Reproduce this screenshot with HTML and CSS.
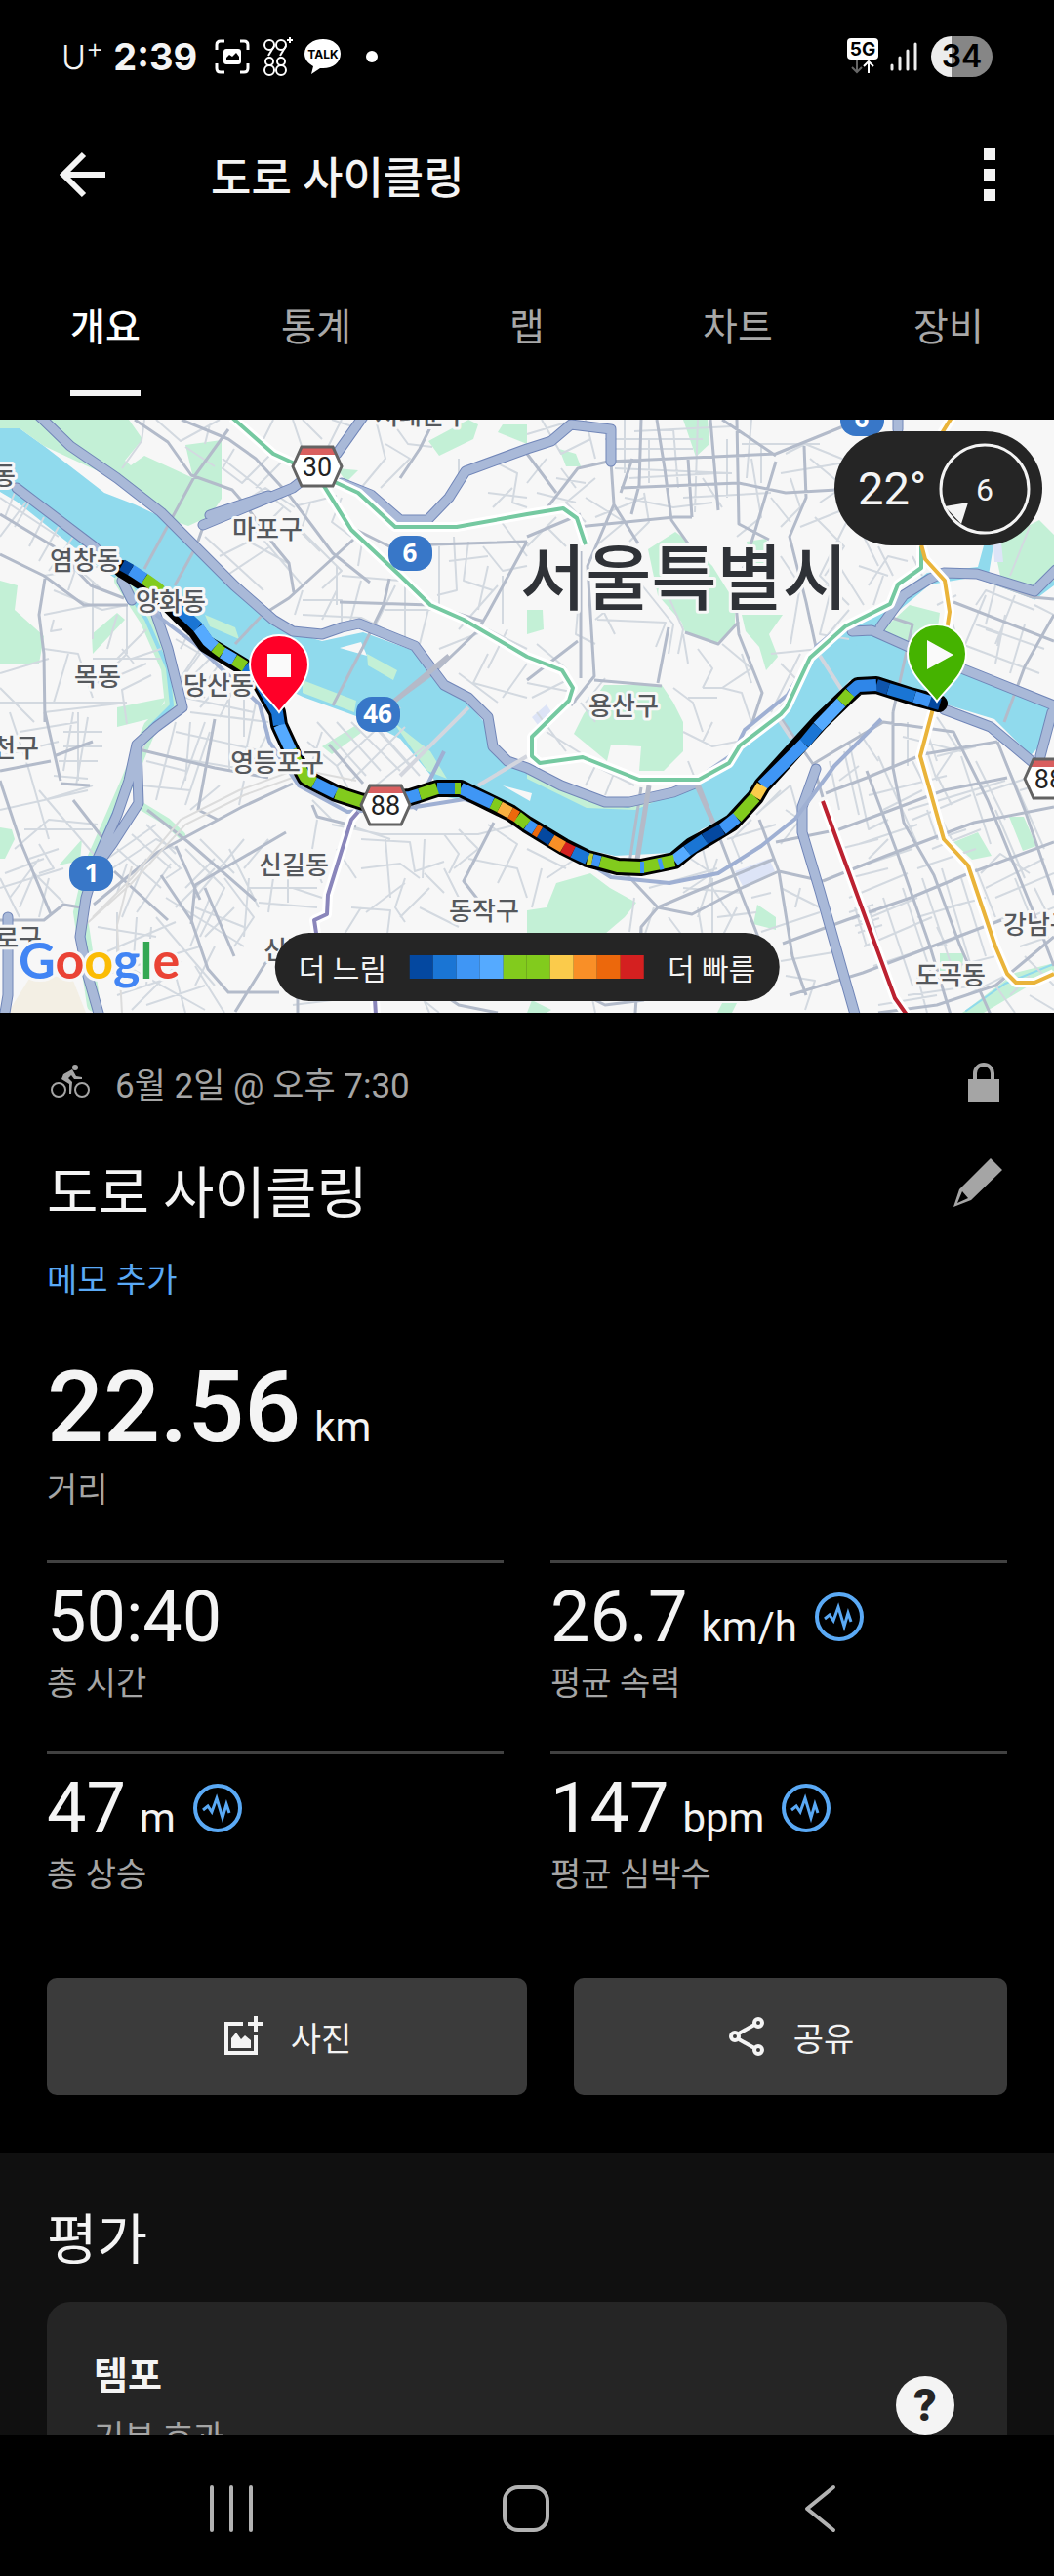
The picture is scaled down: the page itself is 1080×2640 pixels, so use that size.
FILE: index.html
```html
<!DOCTYPE html>
<html lang="ko">
<head>
    <meta charset="UTF-8">
    <meta name="viewport" content="width=device-width, initial-scale=1.0">
    <title>도로 사이클링</title>
    <link rel="stylesheet" href="styles.css">
</head>
<body>
<div class="screen">
    <div class="status-bar">
        <div class="status-left">
            <span class="carrier">U<sup>+</sup></span>
            <span class="clock">2:39</span>
            <svg class="icon-capture" width="36" height="36" viewBox="0 0 36 36" fill="none" stroke="#fff" stroke-width="3">
                <path d="M2 11V6q0-4 4-4h4M26 2h4q4 0 4 4v5M34 25v5q0 4-4 4h-4M10 34H6q-4 0-4-4v-5"/>
                <rect x="9" y="10" width="18" height="16" rx="3" fill="#fff" stroke="none"/>
                <path d="M12 22v-3l3-3 3 2 4-4 3 4v4z" fill="#000" stroke="none"/>
            </svg>
            <svg class="icon-count" width="30" height="40" viewBox="0 0 30 40" fill="none" stroke="#fff" stroke-width="2">
                <circle cx="6" cy="8" r="5"/><path d="M11 9 5 19"/>
                <circle cx="18" cy="8" r="5"/><path d="M23 9l-6 10"/>
                <circle cx="6" cy="25" r="4"/><circle cx="6" cy="34" r="5"/>
                <circle cx="18" cy="25" r="4"/><circle cx="18" cy="34" r="5"/>
                <path d="M27 0v6M24 3h6"/>
            </svg>
            <svg class="icon-talk" width="38" height="36" viewBox="0 0 38 36">
                <path d="M19 0C9 0 0 6 0 15c0 6 4 10 9 13L7 36l9-6h3c10 0 18-6 18-15S29 0 19 0z" fill="#fff"/>
                <text x="19" y="20" text-anchor="middle" class="talk-text">TALK</text>
            </svg>
            <span class="dot"></span>
        </div>
        <div class="status-right">
            <svg width="34" height="40" viewBox="0 0 34 40" fill="none">
                <rect x="1" y="1" width="32" height="22" rx="4" fill="#fff"/>
                <text x="17" y="19" text-anchor="middle" class="net-text">5G</text>
                <path d="M11 24v12M6 31l5 5 5-5" stroke="#666" stroke-width="2"/>
                <path d="M23 37V25M18 30l5-5 5 5" stroke="#fff" stroke-width="2"/>
            </svg>
            <svg class="icon-signal" width="28" height="32" viewBox="0 0 28 32" stroke="#eee" stroke-width="3" stroke-linecap="round">
                <path d="M2 25v4M10 17v12M18 10v19M26 3v26"/>
            </svg>
            <span class="battery">34</span>
        </div>
    </div>

    <header class="app-bar">
        <button class="icon-button" type="button" aria-label="뒤로">
            <svg width="48" height="48" viewBox="0 0 48 48" fill="none" stroke="#f4f4f4" stroke-width="6"><path d="M48 24H5M26 3 5 24l21 21"/></svg>
        </button>
        <h1>도로 사이클링</h1>
        <button class="icon-button" type="button" aria-label="더보기">
            <svg width="12" height="54" viewBox="0 0 12 54" fill="#f4f4f4"><path d="M0 0h12v12H0zM0 21h12v12H0zM0 42h12v12H0z"/></svg>
        </button>
    </header>

    <nav class="tabs">
        <a class="active" href="#overview"><span>개요</span></a>
        <a href="#stats"><span>통계</span></a>
        <a href="#laps"><span>랩</span></a>
        <a href="#charts"><span>차트</span></a>
        <a href="#gear"><span>장비</span></a>
    </nav>

    <main>
        <section class="map" id="overview">
            <svg class="map-canvas" viewBox="0 0 1080 608">
                <rect width="1080" height="608" fill="#f7f7f7"/>

                <!-- river -->
                <g fill="#90daed">
                    <path d="M0 9H20L45 27l62 48 31 12 34 16 31 30 48 47 31 33 48 14 42-9 55 20 27 39 25 13 17 20 10 30 34 17 62 27 41 8 48-15 28-12 31-21 10-17 35-26 17-14 28-53 30-23 52 20 76 26 82 34v3l-10 36-14 14-27-27-10-10-66-20-55-23-27 3-35 40-58 67-25 30-34 16-31 24-58 3-45-10-45-33-48-10-34-7-17-23-31-37-45-23-55-20-55-27-48-37-45-30-42-26-24-17-34-27-45-36-17-10z"/>
                    <path d="M868 216l44-30 38-29 52-6 6-22h10l-5 30-60 10-30 25-45 38z"/>
                </g>
                <path d="M1000 158l60 22 20-15" fill="none" stroke="#90daed" stroke-width="8"/>

                <!-- parks -->
                <g fill="#c3f0d6">
                    <path d="M0 0h132l14 20-18 22 6 5 14-10 50 23-8-34 37-5v60l-12 18-22 10-15-5-73-49-60-28L20 9H0z"/>
                    <path d="M0 165l18 5-3 25 30 27-5 28H0zM94 220l26-22 8 7-33 35zM439 22l41-22 10 5-5 15-35 17zM515 5h25v20l-30-12zM700 0h25l2 25-14 13zM573 30l17 5 5 13h-15z"/>
                    <path d="M664 133l28-18 11 8 27 27 23 37v26l-20 17-31-12-4-11-24-27zM760 200h42l-14 20 9 23-12 14-7-24-14-16zM765 125l20-3 10 38-25-10zM540 195h16l1 20-17 5z"/>
                    <path d="M619 272h59l12 18 10 20v30l-20 20h-25l2-25-31-2-4 17-34-28 10-20z"/>
                    <path d="M1018 127l47-24 15 15v47l-20 7-35-12zM932 190l31 8-3 22-35 10-20-15z"/>
                    <path d="M540 503l20-3 10-25 35-10 20 15 27 15-12 15-20 17h-80zM776 497l19 13v13l-23-6zM977 433l25-10 14 24-20 4zM1034 407h15l13 30-14 5zM963 547h25l-5 30h-20zM1040 567l40-10v8l-72 43h-22z"/>
                    <path d="M0 418l12 2 3 10-10 20H0zM60 457l24-27-2 22zM345 50l22 2-12 12zM545 595l20 10-5 3h-20zM740 598l15 0-5 10h-15z"/>
                    <path d="M310 267l55 21-2 12-53-20zM330 335l35-22 5 8-30 22zM403 310l38 30 17 28-20-8zM376 240l31 17-4 10-26-15zM210 200l31 13 4 12-30-13zM120 295l50-10-10 20-40 10z"/>
                    <path d="M540 363l62 27 41 8 48-15-40 17-50-2-61-30z"/>
                </g>
                <path d="M348 234l22-6 6 14z" fill="#f7f7f7"/>
                <path d="M515 375l30 8-2 8z" fill="#f7f7f7"/>
                <path d="M8 608l27-43 40 10 13 33z" fill="#f3efe4"/>
                <path d="M753 463l35-13 6 13-32 17zM545 305l15-13 5 8-14 13zM1018 128l8-2 2 20-9 0z" fill="#dde4f7"/>
                <g fill="none" stroke-linecap="round">
                    <path d="M124 165l26 40 22 50 4 38-22 22-25 60-35 80-12 50 6 40 8 55" stroke="#c3f0d6" stroke-width="14"/>
                    <path d="M124 165l26 40 22 50 4 38-22 22-25 60-35 80-12 50 6 40 8 55" stroke="#90daed" stroke-width="4"/>
                    <path d="M143 395l28 17 15 14" stroke="#c3f0d6" stroke-width="8"/>
                    <path d="M990 606l40-28 50-20" stroke="#90daed" stroke-width="2"/>
                </g>

                <!-- side streets -->
                <g class="streets-minor">
                    <path d="M148 0l-3 22-20 28M160 0l25 22 40-22M190 28l30 20M215 5l-5 20M240 30l-12 20 20 15 30-30M228 40l70 55M250 10l45 35M262 70l30-30M232 95l40-25 30 20M225 140l30-15 40 22M210 120l60 55M232 160l45-30M250 100l60 70M290 90l-25 25M305 88l40-10M300 105l50 50-20 18M318 85l-10 30 20 20M345 150v40M350 80l-10 25 20 15M310 175l-8 25M350 160l60 5M380 90l20 20M372 120l-5 30"/>
                    <path d="M310 200l60 3 20 10M310 185h40v30M370 165l-12 45M405 170l-20 40M330 205l15-30M395 195h60M415 170v60M440 190l-10 40M450 130v60M465 120l3 55-20 5M480 125l-5 40 30 10M495 130l20 25 25-5M500 150l-10 45M515 160v50M460 145l40-5M470 215l40-45M450 235l50-20 40 20M500 240l-15 30 55 15M520 215l-20 40M540 250l-25 35M470 260l40 30"/>
                    <path d="M385 0l10 40-25 30M395 25l25 15-30 30M400 0l18 25 25 3M350 0l-20 40M370 10l-30-10M300 0l10 30 25 5M280 0l-10 20M310 0l20 20M500 40l30 15-5 30 15 5M500 75l40 5M505 90l20-20M470 40v25M510 100l30 40"/>
                    <path d="M0 80l60 40M15 75l-10 25M30 85l-15 25M45 100L30 130M60 110l-20 35M75 120l-25 35M0 120l30-40M45 160l60-10M60 135l45 40M80 145l-10 30M55 175l50 20 25-5M45 200l50-10M55 205l-3 12 12-2M130 190v50M95 165v60M120 200l-10 35"/>
                    <path d="M45 235l35 5 15 45M0 260l50-15M70 240l-15 50M0 290h130M0 275l35 35M45 300l85-10M130 240l-30 30M150 215l-30 30M125 235l12 15M165 235l-30 10M95 245l70 0M115 265l35-15M155 262l-30 15 5 35"/>
                    <path d="M180 225l25 15-18 25M195 215l-10 20M205 235l-20 30 25 20M215 245l-30 30M225 250l-25 35M235 260l-30 35M245 265l-20 40M190 285l70 15M195 300l80 10M250 285v40M235 280v80M195 310l-5 60M180 320l90 20M170 345l90 15M180 310l-20 80M210 310l-25 70M215 320l-25 75M262 290l-15 75M275 320l-20 40M150 350l40 10M145 375l50 5M155 320l-10 20M225 375l-30 25M250 370l-5 25"/>
                    <path d="M10 300l20 60M20 320l60-10M75 300l-10 60M80 300v70M90 305l-12 70M65 320h40M65 335h40M60 350h40M55 365l35 3M45 390l50-15M0 345l60-15M30 360l20 70M40 380l60 70M0 400l90-20M25 420l70 0M15 440l35-30 50 5M5 465l40-15M40 435l15 25-15 5M0 480l65-20M10 490l30-40M20 500l15-35 30 30M0 470l20 40M50 470l-10 40M60 440l-30 10"/>
                    <path d="M110 450l50-35M100 470l60-40 20 10M120 440l45 40M135 425l40 35M150 415l30 30M130 455l-10 30M150 450l-25 60M175 455l-35 50M165 440l20 20-15 10M190 440l40 40-25 50M205 430l35 35M220 450l-30 30M235 440l30 60M250 430l-50 60M180 500l40-40M170 490l80 50M160 510l60 70M200 500l50 20M215 490l-20 50M240 500l-30 30M230 470l30 40-20 30M255 470l-5 60M140 510l-5 70M155 520l-5 60M120 505v70M100 520l60 10M110 545l70-30M105 570l100-30M120 590l60-20M135 605l50-50M180 570l10 38M200 560l30 48M130 560l80 45M150 600l60-20M220 540l-20 40"/>
                    <path d="M325 310l50 55M345 310l45 50M360 310l50 50M375 305l45 50M390 320l40 45M345 355l65-60M360 370l55-55M385 375l50-40M315 330l30 25 20 40M330 320l-10 30M320 390l20 20 60 20M340 415l50 10h100l40-10M325 410l-5 30M370 430l50 3 5 30 30-10M395 430l5 60M435 430l-2 40M455 425l15 20-10 20M470 420l20 20-25 20M500 415l30 20-20 40M345 440l20 30M370 460l40-5 20 15M415 470l-10 30 10 15M435 465l20 20M455 460l25 50M480 450l50 10 10 30M360 500l40 3-5 40M345 540l25-40M375 505l40-30M430 500l40 20M440 480l-30 30M275 430l-25 30M255 480h70M265 495l60 5M280 470l-5 35M295 445v50M320 450l10 25M300 480l30 10M390 560l60 48M300 600l80-10M410 540l30 68"/>
                    <path d="M540 15l50-15M555 0l20 35 30-15M600 0l10 40M640 0v55M620 20h100M650 12l100-5M630 30l80 0M645 60l90-5M630 50l120 5M665 20v45M690 10l5 60M715 0l-3 95M745 20v60M770 0l-5 60M780 25v40M760 25l80 0M700 80l90-5M640 80l50 10 40-5M720 60l20 30M660 75l5 30-20 20M610 60l-30 25 20 20M590 70l-15-20M560 40l-20 25M600 80l40 25-30 25M580 90l20 30M610 100l50-20M540 130l30-30M560 110l20 20M550 75l40 10M570 60l30 5"/>
                    <path d="M805 35l20-10 50 20M800 55l60-10 20 20M810 60l10 30-20 20M830 40l30 25M840 85l30-20M835 100l30 30-20 30M820 110l50-20M790 80l20 25M870 100l-30 60 30 30M880 110l20 40M850 180l-10 40 30 5M880 150l30 10M890 170l20-30 20 5M905 160l-10 30M830 165l30 10M800 140l20 30-10 60M870 195l-30 35M860 150l25 40M770 40l10 60-25 20M900 130l15 30M935 140l10 20"/>
                    <path d="M595 160l-5 60 20 10M612 205l70 3-10 25M640 180l-30 25M620 170l30-10 40 50-5 30M680 170l20 45-5 25M700 220l5 30M610 180l20 40M715 235l15 20-10 20M740 230l30 25-30 20-20 0M760 240l10 30M790 240l50-5M800 250l20 20-20 25M820 240l-30 60M740 275l20 5 10 30M690 275l20 15 10 30M705 285l30 0M540 270l50 10M545 285l40-20M550 230l30 25M570 250l20 40M620 265l-20 25M595 290l15 20M550 300l30 40M560 320l40 25M590 345l60 30M610 355l-10 20M630 360l-10 25"/>
                    <path d="M700 320l30 15 25-5M705 350l10 25M720 330l10-20M600 560l10 48M700 445l30 20-30 20M720 440l10 40 20 30M735 450l-20 60M770 410l-20 20 10 25M780 400l30-25 10 35-20 25M800 380l-25 25M805 400l15 10M745 430l50-15M700 480l60 5M770 490l20-5M735 510l40-5M755 500l-15 30M715 500l5 30M730 470v60M670 500l-10 30M650 490l-5 35M685 510l15 20M555 460l-10 40M540 440l40 20M590 450l-30 20M665 480l70-20M780 525l60-20M800 480l40 20M820 480l-5 20M800 555l60-10M805 570l30 5-10 30"/>
                    <path d="M850 350l10 50M865 340l15 65M870 330l20 90 20-10M880 320l20 30M900 345l40 90M860 370l20-15M930 310v45M950 320l10 30M925 325l60 15M960 305l20 30-20 30 15 30M935 350l40 80M960 345l40-10M985 345l30 90M890 385l80-20M930 400l100-30M905 400l40-20M1000 350l30 60M1030 350l40 90M1045 380l35-10M1000 385l60-20M935 410l60-25M910 430l-20 20M880 435l60-20M950 400l10 30 30-10M860 440l40-10M875 460l60-20M955 440l50-20M1020 400l30 70"/>
                    <path d="M870 470l40-10M870 490l60-25M880 515l60-25M885 540l70-30M895 560l60-20M890 500l20 70M905 490l30 90M925 480l30 90M945 470l30 90M965 460l30 100M985 470l25 80M1000 460l20 50M940 460l60-20M940 510l50-15M960 540l70-30M970 500l40-10M1010 480l60-30M1020 490l60-25M1005 465l20-20 30 20M1040 470l20 50M1060 480l20 40M1030 520l50-20M1045 540l30-10M1050 550l30 30M1035 590l20-20M1055 590l25 15M980 560l40-10M990 590l40-20M930 590l70-10M900 600l60-10M940 570l10 38M1020 580l20 28M960 520l10 20M950 340l10 30"/>
                    <path d="M870 505l25-8M873 512l25-8M876 519l25-8M879 526l25-8M876 500l12 40M884 497l12 40M1000 190l10-15 50 20M1020 170l-10 40M1040 180l-20 50M1000 210l70 25M985 230l80 30M975 205l10 35M960 190l20-10M1030 200l-10 50M1050 210l-15 50M1060 190l20 10M1010 215l15 5-3 12M1010 180l-25 60M1055 110l-20 50M1035 60l20-10"/>
                </g>
                <!-- main streets -->
                <g class="streets-main">
                    <path d="M138 0l34 23 24 34 42 15 13 15 31 43 14 17 5 30M234 10l-34 47-52 96M208 110l-7 20-22 40M0 97l55 33 38 40 34 13M0 138l45 22 41 30h45M46 163l-6 37 5 40 1 70M186 0l48 20 28 20 34 37 45 60 38 30M365 113l34 17 45-2 96-3M362 123l-66 60-27 17-28 30M540 125l-41 75-10 17-45 43-41 30M348 187l93 3 55 17M399 163l-6 27-21 43-31 60M445 0l-15 30-20 30"/>
                    <path d="M540 35l30 40M561 90l31-40 31-7 172-8 69-28M636 70l121-5 48 10 52-3M626 43l3 44-27 63 7 113-24 30M657 0l-2 67-8 30M673 0l8 50 7 53 17 24M705 40l4 60M728 0l8 93M755 0l2 107 31 16M795 43l-21 70-21 67 4 40 24 60-10 30M824 27l2 53-17 40 17 67 10 46M740 0l55 37M592 110l99-10h18M540 120l55-23M540 267l52-40M609 267l69 6M685 213l-11 57M702 218l34 12 21-23M595 135v130M977 187l103 40M998 160l60 22 22 2M1080 200l-30 53-21 57M905 200l30 10-20 90M629 87l25 40M648 40l-12 35"/>
                    <path d="M798 303l35 50 10 34M833 353l72-43 72 10 35 70 45 110 23 60M915 300v57l11 56 31 54 27 73 31 70M888 360l31 83 34 97 21 70M846 383l42-16 58-24 76-13M795 433l65-13 107-40 65-13M843 473l65-26 90-34 82-16M802 537l65-24 66-23 55-23 92-34M809 590l75-23 97-37 45-17M778 410l20 53 14 87 14 40M716 373l27 70 17 44 18 46M657 377l-14 90 31 33 35 7 51-27 38-17 45 10M1022 330l28 70 30 87M657 520l-6 88M643 467l-20-5M674 500l35-15 85-35M657 540v-20l17-20"/>
                    <path d="M0 360l52-10M0 370l21 63 31 74M46 300l16 70M0 513h45l20-16 18 3M96 497l66-54 86-46 52-24M117 463l55 50M151 400l42 33 69 60M165 467l31 46 17 50 21 24h52M293 423l-93 54-4 40M138 337l82 20 55 10M220 307l-17 93 20 10M506 413l-31 60 21 27M337 333l35 40M241 607l31-50 40-20M210 480l30 70M180 437l25 55M75 390l35 45M62 373l30 2M55 345l40-15M305 590l0 18M410 560l60 40 40 8M320 395l5 12 40 10M600 590l20 10 40-5M900 608l60-8 60-20 60-50"/>
                </g>
                <!-- railways -->
                <g fill="none" stroke="#dcdcdc" stroke-width="2">
                    <path d="M95 510l40-40 50-60 60-30 60-22 60 12M85 520l50-45 55-60 60-30 55-20M125 608l-5-90 15-60"/>
                </g>

                <!-- expressways -->
                <g class="expressway-edge">
                    <path id="e1" d="M40-4l32 31 48 33 45 35 35 35 40 40 40 35 20 12 30 3 20-7 18-4 57 23 30 40 25 13 20 20 5 30 15 15 20 7 35 18 45 17h25l45-10 22-9"/>
                    <path id="e2" d="M17 70l79 60 26 25M125 165l10 20M160 200l12 35 15 60-27 20-20 18-8 37-12 35-20 45-12 40-6 40 8 40 12 42M140 335l2 58-27 42-11 15"/>
                    <path id="e3" d="M208 108l92-38 45-35 27-38M215 98l60-20M350 65l30 12 30 26h28l22-23 17-27 63-23 25-8 20-17 41 5v33"/>
                    <path id="e4" d="M902 213l24-33 27-17 14-6 34 1 59 18 22-22M873 217l20-1 47 21 140 56M967 297l48 18 50 42 20 20M836 358l-14 39v26l18 60 37 130M1078 300l-12 45M920 0v10M8 510v80l-4 24"/>
                </g>
                <g class="expressway">
                    <use href="#e1"/><use href="#e2"/><use href="#e3"/><use href="#e4"/>
                </g>
                <g class="expressway-thin">
                    <path d="M160 200l40 30 66 62 10 38 30 45 50 27 70-5 50-8 50 16 40 26 60 38 60 6 50-10 44-28 35-28 40-54 48-48M716 367l35-24 12-25 44-36 30-50 25-20M455 340l-30 60"/>
                </g>
                <g fill="none" stroke="#b5bac8" stroke-width="5">
                    <path d="M400 292l60-50M665 375l-12 76M714 375l20 45"/>
                </g>
                <g fill="none" stroke="#d3d6de" stroke-width="4">
                    <path d="M840 242l27 42M480 295l-70 70M795 303l16 24M540 345l-50 30"/>
                </g>

                <!-- subway lines -->
                <g class="subway-case">
                    <path id="s2" d="M238-2l42 37 50 23 37 17 38 35h63l72-13 37-6 14 10 9 27M330 65l30 48 50 47 31 30 34 15 65 38 36 14 11 18-4 13-38 37v20l8 7 44-6 58 23h61l31-17 11-18 42-32 6-7 24-51 36-32 46-23 8-20 24-17v-22"/>
                    <path id="s3" d="M975-2l-10 16M944 128l4 15 20 22 5 32-2 13-16 90-12 45 24 85 25 27 28 83 12 28 9 9h19l20-9"/>
                    <path id="s4" d="M843 391l74 202 12 17"/>
                    <path id="s5" d="M367 402l-7 8-24 77-1 20-13 6 3 20 3 10M384 594l1 16"/>
                </g>
                <g class="subway">
                    <use href="#s2" stroke="#75c9a1"/>
                    <use href="#s3" stroke="#eab43a"/>
                    <use href="#s4" stroke="#bc2231"/>
                    <use href="#s5" stroke="#8a86bb"/>
                </g>

                <!-- ride track, coloured by speed -->
                <path class="track-edge" d="M962 291l-30-8-34-11-19 1-15 14-24 23-59 65-7 12-24 26-28 17-13 7-18 15-34 7-24-1-31-8-24-12-38-23-17-12-51-25h-24l-28 9-48 5-28-9-31-16-13-24-14-30-2-13-20-35-15-12-38-23-10-14-17-16-24-24-14-10-21-13"/>
                <g class="track">
                    <path stroke="#0448a0" d="M963 292l-10-3"/>
                    <path stroke="#3f96f5" d="M953 289l-16-5"/>
                    <path stroke="#1a75d4" d="M937 284l-27-8"/>
                    <path stroke="#0f55ac" d="M910 276l-12-4"/>
                    <path stroke="#2f86e8" d="M898 272l-19 1-8 7"/>
                    <path stroke="#82cb1d" d="M871 280l-9 10"/>
                    <path stroke="#55aaff" d="M862 290l-24 25"/>
                    <path stroke="#1a75d4" d="M838 315l-14 17"/>
                    <path stroke="#3f96f5" d="M824 332l-43 43"/>
                    <path stroke="#fbcb4b" d="M781 375l-7 12"/>
                    <path stroke="#82cb1d" d="M774 387l-19 21"/>
                    <path stroke="#3f96f5" d="M755 408l-15 12"/>
                    <path stroke="#0448a0" d="M740 420l-18 10"/>
                    <path stroke="#1a75d4" d="M722 430l-18 12"/>
                    <path stroke="#55aaff" d="M704 442l-13 10"/>
                    <path stroke="#82cb1d" d="M691 452l-34 7-24-1-18-5"/>
                    <path stroke="#3f96f5" d="M615 453l-8-2M660 459l-4 0M679 455l-4 1"/>
                    <path stroke="#b9cd33" d="M607 451l-5-1"/>
                    <path stroke="#1a75d4" d="M602 450l-15-7"/>
                    <path stroke="#d42020" d="M587 443l-10-5"/>
                    <path stroke="#f98f27" d="M577 438l-12-7"/>
                    <path stroke="#0448a0" d="M565 431l-12-8"/>
                    <path stroke="#ec680c" d="M553 423l-5-3"/>
                    <path stroke="#3f96f5" d="M548 420l-8-5"/>
                    <path stroke="#82cb1d" d="M540 415l-10-8"/>
                    <path stroke="#ec680c" d="M530 407l-7-4"/>
                    <path stroke="#fbb040" d="M523 403l-11-6"/>
                    <path stroke="#82cb1d" d="M512 397l-8-4"/>
                    <path stroke="#3f96f5" d="M504 393l-32-15"/>
                    <path stroke="#82cb1d" d="M472 378h-6"/>
                    <path stroke="#1a75d4" d="M466 378h-18"/>
                    <path stroke="#82cb1d" d="M448 378l-18 6"/>
                    <path stroke="#3f96f5" d="M430 384l-10 3-20 2"/>
                    <path stroke="#82cb1d" d="M400 389l-28 3-28-9"/>
                    <path stroke="#3f96f5" d="M344 383l-22-11"/>
                    <path stroke="#82cb1d" d="M322 372l-9-5-13-24-2-4"/>
                    <path stroke="#55aaff" d="M298 339l-12-26"/>
                    <path stroke="#1a75d4" d="M286 313l-2-13-20-35-13-12"/>
                    <path stroke="#82cb1d" d="M251 253l-11-7M228 239l-8-6"/>
                    <path stroke="#55aaff" d="M240 246l-12-7M220 233l-7-6-10-14"/>
                    <path stroke="#1a75d4" d="M203 213l-17-16-10-10"/>
                    <path stroke="#82cb1d" d="M176 187l-14-14-14-10"/>
                    <path stroke="#3f96f5" d="M148 163l-14-9"/>
                    <path stroke="#0448a0" d="M134 154l-9-5"/>
                </g>

                <!-- place names -->
                <g class="places">
                    <text x="4" y="67" text-anchor="middle">동</text>
                    <text x="432" y="5" text-anchor="middle">서대문구</text>
                    <text x="274" y="122" text-anchor="middle">마포구</text>
                    <text x="87" y="154" text-anchor="middle">염창동</text>
                    <text x="175" y="196" text-anchor="middle">양화동</text>
                    <text x="100" y="273" text-anchor="middle">목동</text>
                    <text x="224" y="282" text-anchor="middle">당산동</text>
                    <text x="40" y="346" text-anchor="end">양천구</text>
                    <text x="284" y="361" text-anchor="middle">영등포구</text>
                    <text x="301" y="466" text-anchor="middle">신길동</text>
                    <text x="43" y="541" text-anchor="end">구로구</text>
                    <text x="270" y="553">신림동</text>
                    <text x="496" y="513" text-anchor="middle">동작구</text>
                    <text x="639" y="303" text-anchor="middle">용산구</text>
                    <text x="974" y="579" text-anchor="middle">도곡동</text>
                    <text x="1028" y="527">강남구</text>
                    <text class="city" x="701" y="189" text-anchor="middle">서울특별시</text>
                </g>

                <!-- road shields -->
                <g class="shields-blue">
                    <rect x="398" y="119" width="45" height="36" rx="16"/><text x="420" y="146">6</text>
                    <rect x="365" y="284" width="45" height="36" rx="16"/><text x="387" y="311">46</text>
                    <rect x="71" y="447" width="45" height="36" rx="16"/><text x="94" y="474">1</text>
                    <rect x="861" y="-19" width="45" height="36" rx="16"/><text x="883" y="8">6</text>
                </g>
                <g class="shields-hex">
                    <g id="hex" transform="translate(325 48)">
                        <path d="M-25 0l9-20h32l9 20-9 20h-32z" fill="#fff"/>
                        <path d="M-20-12l4-8h32l4 8z" fill="#d95f5f"/>
                        <path d="M-25 0l9-20h32l9 20-9 20h-32z" fill="none" stroke="#636363" stroke-width="3"/>
                    </g>
                    <use href="#hex" x="70" y="347"/>
                    <use href="#hex" x="750" y="320"/>
                    <text x="325" y="58">30</text><text x="395" y="405">88</text><text x="1075" y="378">88</text>
                </g>

                <!-- stop and start pins -->
                <g stroke="#fff" stroke-width="2">
                    <path fill="#ff0028" d="M286 300c-8-12-30-28-30-49a30 30 0 0 1 60 0c0 21-22 37-30 49z"/>
                    <path fill="#45b300" d="M960 289c-8-12-30-28-30-49a30 30 0 0 1 60 0c0 21-22 37-30 49z"/>
                </g>
                <path fill="#fafafa" d="M274 240h24v24h-24zM950 226l27 15-27 15z"/>

                <text class="google" x="19" y="573"><tspan fill="#4285f4">G</tspan><tspan fill="#ea4335">o</tspan><tspan fill="#fbbc05">o</tspan><tspan fill="#4285f4">g</tspan><tspan fill="#34a853">l</tspan><tspan fill="#ea4335">e</tspan></text>
            </svg>

            <div class="weather">
                <span class="temperature">22°</span>
                <svg width="96" height="96" viewBox="0 0 96 96">
                    <circle cx="48" cy="48" r="45" fill="none" stroke="#f4f4f4" stroke-width="3"/>
                    <path d="M7 66l24-4-7 22z" fill="#f4f4f4"/>
                    <text x="48" y="60" text-anchor="middle" class="wind">6</text>
                </svg>
            </div>

            <div class="legend">
                <span>더 느림</span>
                <div class="scale">
                    <i class="s1"></i><i class="s2"></i><i class="s3"></i><i class="s4"></i><i class="s5"></i><i class="s5"></i><i class="s6"></i><i class="s7"></i><i class="s8"></i><i class="s9"></i>
                </div>
                <span>더 빠름</span>
            </div>
        </section>

        <section class="summary">
            <div class="meta">
                <svg width="40" height="36" viewBox="0 0 40 36" fill="none" stroke="#a5a5a5" stroke-width="2">
                    <circle cx="8" cy="26" r="7"/><circle cx="32" cy="26" r="7"/>
                    <path d="M22 5l-9 5-2 5 8 5v10h2l1-12-4-4 3-3 3 4h8v-2l-6-1z" fill="#a5a5a5" stroke="none"/>
                    <circle cx="25" cy="3" r="3" fill="#a5a5a5" stroke="none"/>
                </svg>
                <span>6월 2일 @ 오후 7:30</span>
                <svg class="lock" width="32" height="40" viewBox="0 0 32 40"><path d="M7 18v-7a9 9 0 0 1 18 0v7" fill="none" stroke="#a5a5a5" stroke-width="4"/><path d="M0 17h32v23H0z" fill="#a5a5a5"/></svg>
            </div>
            <div class="title-row">
                <h2>도로 사이클링</h2>
                <button class="icon-button" type="button" aria-label="편집">
                    <svg width="50" height="50" viewBox="0 0 50 50"><path d="M38 0l12 12-32 31L0 50l6-18zM9 34l-5 12 11-5z" fill="#a5a5a5" fill-rule="evenodd"/></svg>
                </button>
            </div>
            <a class="memo" href="#memo">메모 추가</a>

            <div class="stat distance">
                <p class="value">22.56<span class="unit">km</span></p>
                <p class="label">거리</p>
            </div>

            <svg class="defs" width="0" height="0">
                <symbol id="pulse" viewBox="0 0 50 50">
                    <circle cx="25" cy="25" r="23" fill="none" stroke="#5aa9f5" stroke-width="4"/>
                    <path d="M10 27l5-4 4 6 5-14 6 20 4-14 3 9" fill="none" stroke="#5aa9f5" stroke-width="3"/>
                </symbol>
            </svg>
            <div class="stats">
                <div class="stat">
                    <p class="value">50:40</p>
                    <p class="label">총 시간</p>
                </div>
                <div class="stat">
                    <p class="value">26.7<span class="unit">km/h</span><svg class="pulse"><use href="#pulse"/></svg></p>
                    <p class="label">평균 속력</p>
                </div>
                <div class="stat">
                    <p class="value">47<span class="unit">m</span><svg class="pulse"><use href="#pulse"/></svg></p>
                    <p class="label">총 상승</p>
                </div>
                <div class="stat">
                    <p class="value">147<span class="unit">bpm</span><svg class="pulse"><use href="#pulse"/></svg></p>
                    <p class="label">평균 심박수</p>
                </div>
            </div>

            <div class="actions">
                <button class="photo" type="button">
                    <svg width="42" height="42" viewBox="0 0 42 42" fill="none" stroke="#f4f4f4" stroke-width="4"><path d="M21 8H4v30h30V20M34 0v16M26 8h16"/><path d="M9 33V23l5-6 5 7 4-4 6 5v8z" fill="#f4f4f4" stroke="none"/></svg>
                    사진
                </button>
                <button class="share" type="button">
                    <svg width="40" height="42" viewBox="0 0 40 42" fill="none" stroke="#f4f4f4" stroke-width="4"><circle cx="8" cy="21" r="4"/><circle cx="32" cy="7" r="4"/><circle cx="32" cy="35" r="4"/><path d="M12 18 28 9M12 24l16 9"/></svg>
                    공유
                </button>
            </div>
        </section>

        <section class="evaluation">
            <h2>평가</h2>
            <div class="card">
                <div>
                    <h3>템포</h3>
                    <p>기본 효과</p>
                </div>
                <button class="help" type="button" aria-label="도움말">?</button>
            </div>
        </section>
    </main>

    <div class="system-nav">
        <button type="button" aria-label="최근 앱"><svg width="48" height="50" viewBox="0 0 48 50"><path d="M5 3v44M25 3v44M45 3v44"/></svg></button>
        <button type="button" aria-label="홈"><svg width="50" height="50" viewBox="0 0 50 50"><rect x="3" y="3" width="44" height="44" rx="14"/></svg></button>
        <button type="button" aria-label="뒤로"><svg width="50" height="50" viewBox="0 0 50 50"><path d="M36 3 9 25l27 22"/></svg></button>
    </div>
</div>
</body>
</html>
```

FILE: styles.css
```css
* {
    box-sizing: border-box;
}

body {
    margin: 0;
    background-color: #000;
    color: #f4f4f4;
    font-family: Roboto, "Noto Sans CJK KR", sans-serif;
    font-size: 34px;
}

h1, h2, h3, p {
    margin: 0;
    font-weight: 400;
}

button {
    border: 0;
    padding: 0;
    background: none;
    color: inherit;
    font: inherit;
}

svg {
    display: block;
    flex-shrink: 0;
}

.screen {
    display: flex;
    flex-direction: column;
    height: 100vh;
}

/* status bar */
.status-bar {
    display: flex;
    justify-content: space-between;
    align-items: center;
    height: 116px;
    padding: 0 63px;
}

.status-left,
.status-right {
    display: flex;
    align-items: center;
}

.carrier {
    font-family: Inter, sans-serif;
    font-size: 34px;
    font-weight: 300;
}

.carrier sup {
    font-size: 28px;
    line-height: 0;
}

.clock {
    margin: 0 18px 0 10px;
    font-family: Inter, sans-serif;
    font-size: 38px;
    font-weight: 700;
}

.icon-count {
    margin: 0 12px 0 14px;
}

.talk-text {
    font: 700 12px Inter, sans-serif;
}

.net-text {
    fill: #000;
    font: 700 19px Inter, sans-serif;
}

.dot {
    width: 12px;
    height: 12px;
    margin-left: 25px;
    border-radius: 50%;
    background-color: #fff;
}

.icon-signal {
    margin: 0 14px 0 11px;
}

.battery {
    width: 63px;
    border-radius: 21px;
    background: linear-gradient(to right, #ececec 21px, #868686 21px);
    color: #000;
    font-family: Inter, sans-serif;
    font-weight: 600;
    font-size: 32px;
    line-height: 42px;
    text-align: center;
}

/* app bar */
.app-bar {
    display: flex;
    align-items: center;
    height: 126px;
    padding: 0 60px;
}

.app-bar h1 {
    flex: 1;
    margin-left: 108px;
    font-size: 45px;
    font-weight: 500;
}

.tabs {
    display: grid;
    grid-template-columns: repeat(5, 1fr);
    height: 188px;
    padding-bottom: 24px;
    color: #a8a8a8;
    font-size: 39px;
    text-align: center;
}

.tabs a {
    color: inherit;
    text-decoration: none;
}

.tabs span {
    display: inline-block;
    height: 100%;
    padding-top: 62px;
}

.tabs .active {
    color: #fff;
    font-weight: 500;
}

.tabs .active span {
    border-bottom: 6px solid #f4f4f4;
}

main {
    flex: 1;
    min-height: 0;
    overflow-y: auto;
    scrollbar-width: none;
}

/* map */
.map {
    position: relative;
}

.map-canvas {
    width: 100%;
    height: auto;
}

.streets-minor,
.streets-main,
.expressway,
.expressway-edge,
.expressway-thin,
.subway,
.subway-case,
.track,
.track-edge {
    fill: none;
    stroke-linejoin: round;
}

.streets-minor {
    stroke: #d3d9e0;
    stroke-width: 2;
}

.streets-main {
    stroke: #b3bbca;
    stroke-width: 3;
}

/* the paths carry no stroke of their own, so the reused copies can be recoloured */
.expressway-edge {
    stroke: #7186b8;
    stroke-width: 11;
    stroke-linecap: round;
}

.expressway {
    stroke: #a9b9d8;
    stroke-width: 9;
    stroke-linecap: round;
}

.expressway-thin {
    stroke: #9fb0d3;
    stroke-width: 4;
}

.subway-case {
    stroke: #fff;
    stroke-width: 10;
}

.subway {
    stroke-width: 4;
}

.track-edge {
    stroke: #000;
    stroke-width: 18;
    stroke-linecap: round;
}

.track {
    stroke-width: 12;
}

.places text {
    fill: #55585c;
    stroke: #f7f7f7;
    stroke-width: 6px;
    stroke-linejoin: round;
    paint-order: stroke;
    font-family: "Noto Sans CJK KR", sans-serif;
    font-size: 26px;
    font-weight: 500;
}

.places .city {
    fill: #2f3237;
    font-size: 73px;
}

.shields-blue {
    fill: #3877c8;
}

.shields-blue text {
    fill: #fff;
    font-family: "Noto Sans", sans-serif;
    font-size: 26px;
    font-weight: 700;
    text-anchor: middle;
}

.shields-hex text {
    fill: #222;
    font-size: 27px;
    text-anchor: middle;
}

.google {
    font-family: Lato, sans-serif;
    font-size: 52px;
    font-weight: 700;
    stroke: #f7f7f7;
    stroke-width: 6px;
    paint-order: stroke;
}

.weather {
    position: absolute;
    top: 12px;
    right: 12px;
    display: flex;
    align-items: center;
    justify-content: space-between;
    width: 213px;
    height: 117px;
    padding: 0 11px 0 24px;
    border-radius: 59px;
    background-color: #252525;
}

.temperature {
    font-size: 47px;
}

.wind {
    fill: #f4f4f4;
    font-size: 32px;
}

.legend {
    position: absolute;
    bottom: 12px;
    left: 50%;
    transform: translateX(-50%);
    display: flex;
    align-items: center;
    gap: 24px;
    height: 70px;
    padding: 0 24px;
    border-radius: 35px;
    background-color: #252525;
    font-size: 30px;
    white-space: nowrap;
}

.scale {
    display: flex;
}

.scale i {
    width: 24px;
    height: 24px;
}

.s1 { background-color: #0448a0; }
.s2 { background-color: #1a75d4; }
.s3 { background-color: #3f96f5; }
.s4 { background-color: #55aaff; }
.s5 { background-color: #82cb1d; }
.s6 { background-color: #fbcb4b; }
.s7 { background-color: #f98f27; }
.s8 { background-color: #ec680c; }
.s9 { background-color: #d42020; }

/* activity summary */
.summary {
    padding: 46px 48px 60px;
}

.meta {
    display: flex;
    align-items: center;
    gap: 26px;
    height: 50px;
    padding: 0 8px 0 4px;
    color: #a5a5a5;
    font-size: 35px;
}

.meta .lock {
    margin-left: auto;
}

.title-row {
    display: flex;
    justify-content: space-between;
    align-items: center;
    height: 84px;
    margin-top: 42px;
    padding-right: 5px;
}

.title-row h2 {
    font-size: 57px;
}

.title-row .icon-button {
    align-self: flex-start;
    margin-top: 11px;
}

.memo {
    display: block;
    margin-top: 27px;
    color: #5aa9f5;
    line-height: 50px;
    text-decoration: none;
}

.value {
    display: flex;
    align-items: baseline;
    height: 84px;
    font-size: 72px;
    line-height: 84px;
}

.unit {
    margin-left: 14px;
    font-size: 42px;
}

.label {
    color: #a5a5a5;
    line-height: 50px;
}

.distance {
    height: 262px;
    padding-top: 45px;
}

.distance .value {
    height: 120px;
    font-size: 102px;
    font-weight: 500;
    line-height: 120px;
}

.distance .unit {
    font-weight: 400;
}

.defs {
    position: absolute;
}

.stats {
    display: grid;
    grid-template-columns: 1fr 1fr;
    column-gap: 48px;
}

.stats .stat {
    height: 196px;
    padding-top: 14px;
    border-top: 3px solid #414141;
}

.pulse {
    width: 50px;
    height: 50px;
    margin-left: 18px;
}

.actions {
    display: flex;
    gap: 48px;
    margin-top: 36px;
}

.actions button {
    display: flex;
    justify-content: center;
    align-items: center;
    gap: 28px;
    height: 120px;
    border-radius: 10px;
    background-color: #3b3b3b;
}

.actions .photo {
    flex: 41;
}

.actions .share {
    flex: 37;
}

/* evaluation */
.evaluation {
    padding: 48px 48px;
    background-color: #101010;
}

.evaluation h2 {
    font-size: 56px;
    line-height: 82px;
}

.card {
    display: flex;
    justify-content: space-between;
    align-items: center;
    height: 212px;
    margin-top: 22px;
    padding: 0 54px 0 48px;
    border-radius: 24px;
    background-color: #252525;
}

.card h3 {
    font-size: 38px;
    font-weight: 700;
    line-height: 56px;
}

.card p {
    margin-top: 10px;
    color: #a5a5a5;
    line-height: 50px;
}

.help {
    width: 60px;
    height: 60px;
    border-radius: 50%;
    background-color: #f4f4f4;
    color: #252525;
    font-size: 46px;
    font-weight: 900;
    line-height: 60px;
}

/* system navigation */
.system-nav {
    display: flex;
    justify-content: center;
    gap: 254px;
    height: 144px;
    padding-top: 6px;
}

.system-nav svg {
    fill: none;
    stroke: #b2b2b2;
    stroke-width: 4;
    stroke-linecap: round;
    stroke-linejoin: round;
}
```
